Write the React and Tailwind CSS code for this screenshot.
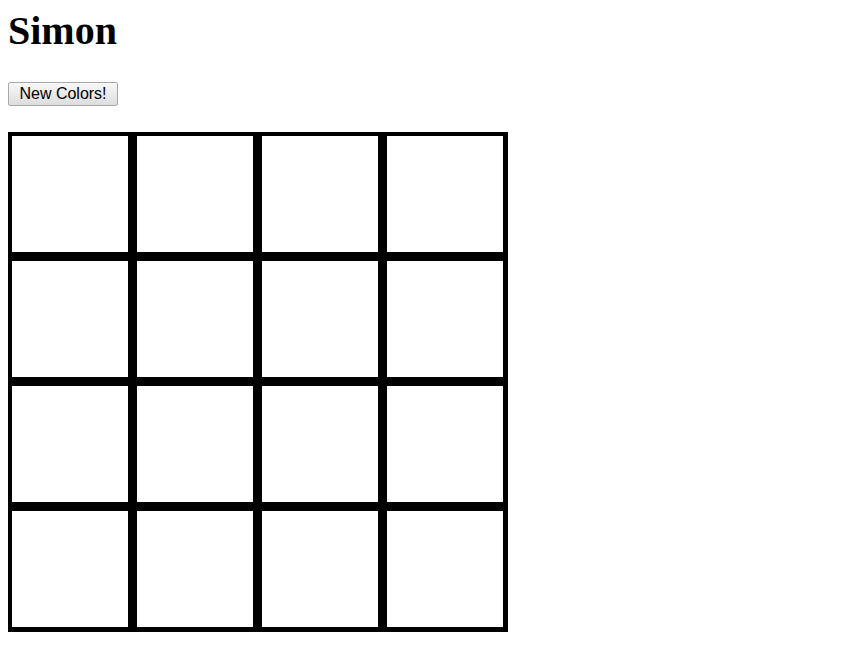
export default function App() {
  const cells = Array.from({ length: 16 });
  return (
    <div className="p-2 bg-white min-h-[663px] text-black">
      <h1
        className="text-[40px] font-bold leading-[46px] m-0"
        style={{ fontFamily: '"Liberation Serif", "Times New Roman", serif' }}
      >
        Simon
      </h1>
      <button
        className="mt-[28px] block h-[24px] w-[110px] border border-[#a9a9a9] rounded-[2px] bg-gradient-to-b from-[#f8f8f8] to-[#dddddd] text-[16px] leading-[20px] text-black px-0"
        style={{ fontFamily: '"Liberation Sans", Arial, sans-serif' }}
      >
        New Colors!
      </button>
      <div className="mt-[26px] grid grid-cols-[repeat(4,125px)] w-[500px]">
        {cells.map((_, i) => (
          <div
            key={i}
            className="w-[125px] h-[125px] border-solid border-black border-l-4 border-t-4 border-r-[5px] border-b-[5px] bg-white"
          />
        ))}
      </div>
    </div>
  );
}
